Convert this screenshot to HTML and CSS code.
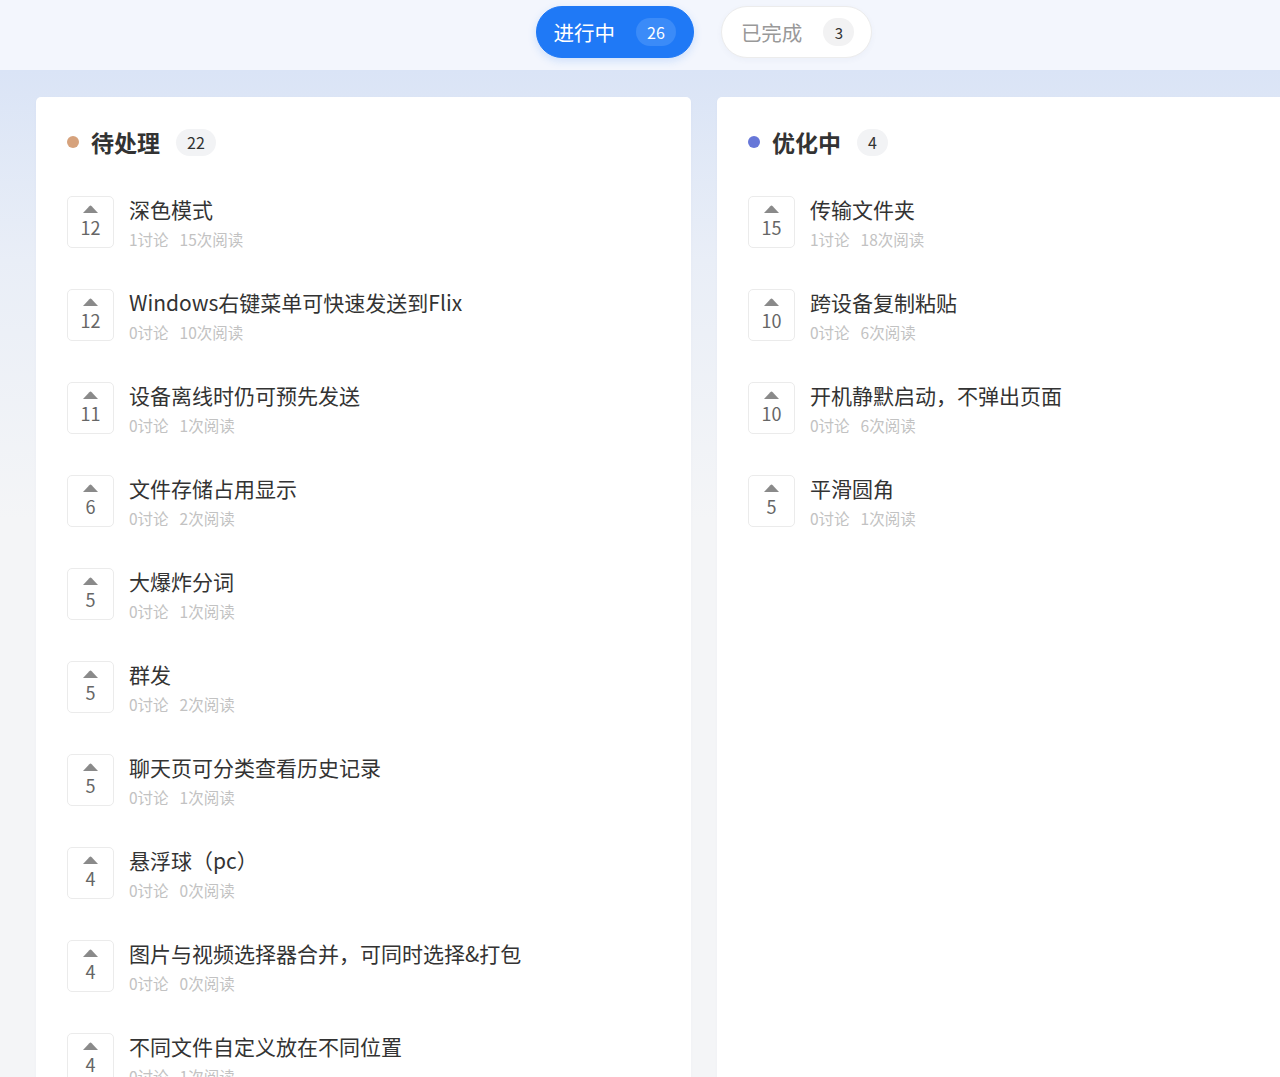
FILE: index.html
```html
<!DOCTYPE html>
<html lang="zh-CN">
<head>
<meta charset="utf-8">
<title>Roadmap</title>
<link rel="stylesheet" href="styles.css">
</head>
<body>
<div class="page">
  <header class="topbar">
    <div class="tabs">
      <div class="tab tab-active"><span class="tab-label">进行中</span><span class="tab-count">26</span></div>
      <div class="tab"><span class="tab-label">已完成</span><span class="tab-count">3</span></div>
    </div>
  </header>
  <main class="board">
    <section class="column">
      <div class="col-head">
        <span class="dot dot-tan"></span>
        <h2 class="col-title">待处理</h2>
        <span class="col-count">22</span>
      </div>
      <ul class="items">
        <li class="item"><div class="vote"><svg class="caret" viewBox="0 0 16 8"><path d="M0.5 8 L6.8 1.2 Q8 0 9.2 1.2 L15.5 8 Z"/></svg><span class="vote-num">12</span></div><div class="item-body"><div class="item-title">深色模式</div><div class="item-meta"><span>1讨论</span><span>15次阅读</span></div></div></li>
        <li class="item"><div class="vote"><svg class="caret" viewBox="0 0 16 8"><path d="M0.5 8 L6.8 1.2 Q8 0 9.2 1.2 L15.5 8 Z"/></svg><span class="vote-num">12</span></div><div class="item-body"><div class="item-title">Windows右键菜单可快速发送到Flix</div><div class="item-meta"><span>0讨论</span><span>10次阅读</span></div></div></li>
        <li class="item"><div class="vote"><svg class="caret" viewBox="0 0 16 8"><path d="M0.5 8 L6.8 1.2 Q8 0 9.2 1.2 L15.5 8 Z"/></svg><span class="vote-num">11</span></div><div class="item-body"><div class="item-title">设备离线时仍可预先发送</div><div class="item-meta"><span>0讨论</span><span>1次阅读</span></div></div></li>
        <li class="item"><div class="vote"><svg class="caret" viewBox="0 0 16 8"><path d="M0.5 8 L6.8 1.2 Q8 0 9.2 1.2 L15.5 8 Z"/></svg><span class="vote-num">6</span></div><div class="item-body"><div class="item-title">文件存储占用显示</div><div class="item-meta"><span>0讨论</span><span>2次阅读</span></div></div></li>
        <li class="item"><div class="vote"><svg class="caret" viewBox="0 0 16 8"><path d="M0.5 8 L6.8 1.2 Q8 0 9.2 1.2 L15.5 8 Z"/></svg><span class="vote-num">5</span></div><div class="item-body"><div class="item-title">大爆炸分词</div><div class="item-meta"><span>0讨论</span><span>1次阅读</span></div></div></li>
        <li class="item"><div class="vote"><svg class="caret" viewBox="0 0 16 8"><path d="M0.5 8 L6.8 1.2 Q8 0 9.2 1.2 L15.5 8 Z"/></svg><span class="vote-num">5</span></div><div class="item-body"><div class="item-title">群发</div><div class="item-meta"><span>0讨论</span><span>2次阅读</span></div></div></li>
        <li class="item"><div class="vote"><svg class="caret" viewBox="0 0 16 8"><path d="M0.5 8 L6.8 1.2 Q8 0 9.2 1.2 L15.5 8 Z"/></svg><span class="vote-num">5</span></div><div class="item-body"><div class="item-title">聊天页可分类查看历史记录</div><div class="item-meta"><span>0讨论</span><span>1次阅读</span></div></div></li>
        <li class="item"><div class="vote"><svg class="caret" viewBox="0 0 16 8"><path d="M0.5 8 L6.8 1.2 Q8 0 9.2 1.2 L15.5 8 Z"/></svg><span class="vote-num">4</span></div><div class="item-body"><div class="item-title">悬浮球（pc）</div><div class="item-meta"><span>0讨论</span><span>0次阅读</span></div></div></li>
        <li class="item"><div class="vote"><svg class="caret" viewBox="0 0 16 8"><path d="M0.5 8 L6.8 1.2 Q8 0 9.2 1.2 L15.5 8 Z"/></svg><span class="vote-num">4</span></div><div class="item-body"><div class="item-title">图片与视频选择器合并，可同时选择&amp;打包</div><div class="item-meta"><span>0讨论</span><span>0次阅读</span></div></div></li>
        <li class="item"><div class="vote"><svg class="caret" viewBox="0 0 16 8"><path d="M0.5 8 L6.8 1.2 Q8 0 9.2 1.2 L15.5 8 Z"/></svg><span class="vote-num">4</span></div><div class="item-body"><div class="item-title">不同文件自定义放在不同位置</div><div class="item-meta"><span>0讨论</span><span>1次阅读</span></div></div></li>
      </ul>
    </section>
    <section class="column">
      <div class="col-head">
        <span class="dot dot-blue"></span>
        <h2 class="col-title">优化中</h2>
        <span class="col-count">4</span>
      </div>
      <ul class="items">
        <li class="item"><div class="vote"><svg class="caret" viewBox="0 0 16 8"><path d="M0.5 8 L6.8 1.2 Q8 0 9.2 1.2 L15.5 8 Z"/></svg><span class="vote-num">15</span></div><div class="item-body"><div class="item-title">传输文件夹</div><div class="item-meta"><span>1讨论</span><span>18次阅读</span></div></div></li>
        <li class="item"><div class="vote"><svg class="caret" viewBox="0 0 16 8"><path d="M0.5 8 L6.8 1.2 Q8 0 9.2 1.2 L15.5 8 Z"/></svg><span class="vote-num">10</span></div><div class="item-body"><div class="item-title">跨设备复制粘贴</div><div class="item-meta"><span>0讨论</span><span>6次阅读</span></div></div></li>
        <li class="item"><div class="vote"><svg class="caret" viewBox="0 0 16 8"><path d="M0.5 8 L6.8 1.2 Q8 0 9.2 1.2 L15.5 8 Z"/></svg><span class="vote-num">10</span></div><div class="item-body"><div class="item-title">开机静默启动，不弹出页面</div><div class="item-meta"><span>0讨论</span><span>6次阅读</span></div></div></li>
        <li class="item"><div class="vote"><svg class="caret" viewBox="0 0 16 8"><path d="M0.5 8 L6.8 1.2 Q8 0 9.2 1.2 L15.5 8 Z"/></svg><span class="vote-num">5</span></div><div class="item-body"><div class="item-title">平滑圆角</div><div class="item-meta"><span>0讨论</span><span>1次阅读</span></div></div></li>
      </ul>
    </section>
  </main>
</div>
</body>
</html>
```
FILE: styles.css
```css
html, body {
  margin: 0;
  padding: 0;
  overflow: hidden;
}
body {
  font-family: "Noto Sans CJK SC", "Noto Sans", sans-serif;
  color: #333;
  background: #f4f5f7;
}
.page {
  width: 1408px;
  min-height: 1077px;
  display: flex;
  flex-direction: column;
  background: linear-gradient(180deg, #f3f6fd 0, #f3f6fd 70px, #dae4f6 70px, #e9eef7 260px, #f4f5f7 520px, #f4f5f7 100%);
}
.topbar {
  height: 70px;
  display: flex;
  justify-content: center;
  align-items: flex-start;
  padding-top: 6px;
  box-sizing: border-box;
}
.tabs {
  display: flex;
  gap: 27px;
  align-items: center;
}
.tab {
  height: 52px;
  box-sizing: border-box;
  border-radius: 26px;
  display: flex;
  align-items: center;
  gap: 21px;
  padding: 0 17px 0 19px;
  background: #fff;
  border: 1px solid #ececec;
  box-shadow: 0 2px 6px rgba(40, 70, 120, 0.04);
}
.tab-label {
  font-size: 20.5px;
  color: #999;
  line-height: 1;
}
.tab-count {
  min-width: 31px;
  height: 28px;
  box-sizing: border-box;
  padding: 0 10px;
  border-radius: 14px;
  background: #f2f2f3;
  color: #333;
  font-size: 15px;
  display: flex;
  align-items: center;
  justify-content: center;
}
.tab-active {
  background: #1f79f6;
  border-color: #1f79f6;
  padding: 0 17px 0 17px;
  box-shadow: 0 3px 8px rgba(31, 121, 246, 0.18);
}
.tab-active .tab-label {
  color: #fff;
}
.tab-active .tab-count {
  background: #3b8bf8;
  color: #fff;
  font-size: 16px;
  padding: 0 11px;
}
.board {
  flex: 1;
  display: flex;
  gap: 26px;
  padding: 27px 36px 0;
}
.column {
  width: 655px;
  flex: none;
  background: #fff;
  border-radius: 5px 5px 0 0;
  padding: 28px 31px 0;
  box-sizing: border-box;
  box-shadow: 0 1px 3px rgba(30, 50, 90, 0.03);
}
.col-head {
  height: 34px;
  display: flex;
  align-items: center;
  margin-bottom: 37px;
}
.dot {
  width: 12px;
  height: 12px;
  border-radius: 50%;
  margin-right: 12px;
}
.dot-tan { background: #d6a27c; }
.dot-blue { background: #6777d8; }
.col-title {
  margin: 0;
  font-size: 23px;
  font-weight: 700;
  color: #333;
  line-height: 34px;
}
.col-count {
  margin-left: 16px;
  height: 27px;
  min-width: 31px;
  box-sizing: border-box;
  padding: 0 11px;
  border-radius: 14px;
  background: #f2f3f5;
  color: #333;
  font-size: 16px;
  display: flex;
  align-items: center;
  justify-content: center;
}
.items {
  list-style: none;
  margin: 0;
  padding: 0;
  display: flex;
  flex-direction: column;
  gap: 41px;
}
.item {
  height: 52px;
  display: flex;
  align-items: flex-start;
  gap: 15px;
}
.vote {
  width: 47px;
  height: 52px;
  flex: none;
  box-sizing: border-box;
  border: 1px solid #ebebeb;
  border-radius: 5px;
  display: flex;
  flex-direction: column;
  align-items: center;
  padding-top: 8px;
}
.caret {
  width: 17px;
  height: 8px;
  fill: #8a8a8a;
  display: block;
}
.vote-num {
  margin-top: 3px;
  font-size: 18px;
  line-height: 22px;
  color: #666;
}
.item-body {
  display: flex;
  flex-direction: column;
}
.item-title {
  font-size: 21px;
  line-height: 27px;
  color: #333;
}
.item-meta {
  margin-top: 7px;
  display: flex;
  gap: 11px;
  font-size: 15.5px;
  line-height: 18px;
  color: #c2c2c2;
}
```
